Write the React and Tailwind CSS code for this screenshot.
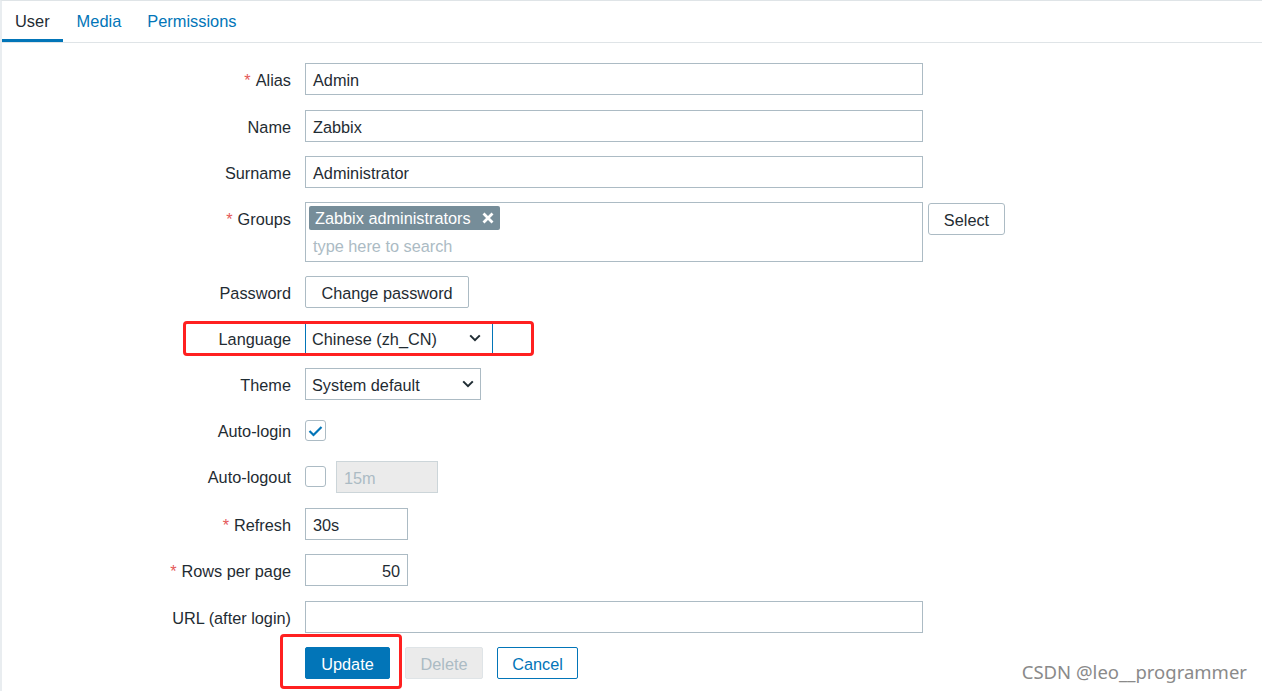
import React from "react";

function Label({ label, req }) {
  return (
    <div className="w-[291px] shrink-0 h-8 pt-[2px] flex items-center justify-end text-[16.3px] text-[#1f2c33] whitespace-nowrap">
      {req && <span className="text-[#e45959] mr-[5px]">*</span>}
      {label}
    </div>
  );
}

function Row({ label, req, children, className = "" }) {
  return (
    <div className={`relative flex items-start ${className}`}>
      <Label label={label} req={req} />
      <div className="ml-[14px] flex items-start">{children}</div>
    </div>
  );
}

function TextBox({ w, children, right }) {
  return (
    <div
      className={`h-8 border border-[#acbbc4] bg-white px-[7px] pt-[2px] flex items-center text-[16.3px] text-[#1f2c33] ${
        right ? "justify-end" : ""
      }`}
      style={{ width: w }}
    >
      {children}
    </div>
  );
}

function Chevron() {
  return (
    <svg width="12" height="8" viewBox="0 0 12 8" fill="none">
      <path d="M1.2 1.4 L6 6.2 L10.8 1.4" stroke="#1f2c33" strokeWidth="2" />
    </svg>
  );
}

function Checkbox({ checked }) {
  return (
    <div className="w-[21px] h-[21px] mt-[6px] border border-[#acbbc4] rounded-[3px] bg-white flex items-center justify-center">
      {checked && (
        <svg width="15" height="12" viewBox="0 0 15 12" fill="none">
          <path d="M1.5 6 L5.5 10 L13.5 2" stroke="#0275b8" strokeWidth="2.2" />
        </svg>
      )}
    </div>
  );
}

export default function App() {
  return (
    <div className="relative w-[1262px] h-[691px] overflow-hidden bg-white font-['Liberation_Sans',Arial,sans-serif] border-t border-l-2 border-t-[#dfe4e7] border-l-[#e9edf0]">
      {/* Tabs */}
      <div className="flex h-[42px] border-b border-[#dfe4e7] text-[16.4px]">
        <div className="px-[13px] flex items-center pt-[3px] border-b-[3px] border-[#0275b8] text-[#1f2c33]">
          User
        </div>
        <div className="px-[13px] flex items-center pt-[3px] border-b-[3px] border-transparent text-[#0275b8] ml-px">
          Media
        </div>
        <div className="px-[13px] flex items-center pt-[3px] border-b-[3px] border-transparent text-[#0275b8]">
          Permissions
        </div>
      </div>

      {/* Form */}
      <div className="flex flex-col gap-[14px] pt-[20px] -ml-[2px]">
        <Row label="Alias" req>
          <TextBox w={618}>Admin</TextBox>
        </Row>
        <Row label="Name" className="mt-px">
          <TextBox w={618}>Zabbix</TextBox>
        </Row>
        <Row label="Surname">
          <TextBox w={618}>Administrator</TextBox>
        </Row>
        <Row label="Groups" req>
          <div className="w-[618px] h-[60px] border border-[#acbbc4] p-[3px] flex flex-col">
            <div className="self-start h-6 bg-[#768d99] rounded-[2px] pl-[6px] pr-[6px] pt-[1px] flex items-center text-white text-[16.3px]">
              Zabbix administrators
              <svg className="ml-[11px] -mt-[1px]" width="12" height="12" viewBox="0 0 12 12" fill="none">
                <path d="M1.5 1.5 L10.5 10.5 M10.5 1.5 L1.5 10.5" stroke="#ffffff" strokeWidth="2.8" />
              </svg>
            </div>
            <div className="pl-[4px] h-[28px] pt-[5px] flex items-center text-[16.3px] text-[#acbbc4]">
              type here to search
            </div>
          </div>
          <div className="ml-[5px] mt-px h-8 w-[77px] border border-[#acbbc4] rounded-[3px] bg-white pt-[2px] flex items-center justify-center text-[16.3px] text-[#1f2c33]">
            Select
          </div>
        </Row>
        <Row label="Password">
          <div className="h-8 w-[164px] border border-[#acbbc4] rounded-[2px] bg-white pt-[2px] flex items-center justify-center text-[16.3px] text-[#1f2c33]">
            Change password
          </div>
        </Row>
        <Row label="Language">
          <div className="h-8 w-[188px] border border-[#0275b8] bg-white pl-[6px] pr-[5px] flex items-center justify-between text-[16.3px] text-[#1f2c33]">
            <span className="pt-[2px]">Chinese (zh_CN)</span>
            <span className="mr-[6px] flex"><Chevron /></span>
          </div>
          <div className="absolute left-[183px] top-[-1px] w-[351px] h-[35px] border-[3px] border-[#ff2020] rounded-[4px] pointer-events-none" />
        </Row>
        <Row label="Theme">
          <div className="h-8 w-[176px] border border-[#acbbc4] bg-white pl-[6px] pr-[6px] flex items-center justify-between text-[16.3px] text-[#1f2c33]">
            <span className="pt-[2px]">System default</span>
            <Chevron />
          </div>
        </Row>
        <Row label="Auto-login">
          <Checkbox checked />
        </Row>
        <Row label="Auto-logout">
          <Checkbox />
          <div className="ml-[10px] mt-px h-8 w-[102px] border border-[#ccd5d9] bg-[#ebebeb] px-[7px] pt-[2px] flex items-center text-[16.3px] text-[#acbbc4]">
            15m
          </div>
        </Row>
        <Row label="Refresh" req className="mt-px">
          <TextBox w={103}>30s</TextBox>
        </Row>
        <Row label="Rows per page" req>
          <TextBox w={103} right>
            50
          </TextBox>
        </Row>
        <Row label="URL (after login)" className="mt-px">
          <TextBox w={618}></TextBox>
        </Row>
        <div className="relative flex items-start">
          <div className="w-[291px] shrink-0" />
          <div className="ml-[14px] flex items-start text-[16.3px]">
            <div className="h-8 w-[85px] bg-[#0275b8] border border-[#0275b8] rounded-[2px] text-white pt-[2px] flex items-center justify-center">
              Update
            </div>
            <div className="ml-[15px] h-8 w-[78px] bg-[#ebebeb] border border-[#dfe4e7] rounded-[2px] text-[#acbbc4] pt-[2px] flex items-center justify-center">
              Delete
            </div>
            <div className="ml-[14px] h-8 w-[81px] bg-white border border-[#0275b8] rounded-[2px] text-[#0275b8] pt-[2px] flex items-center justify-center">
              Cancel
            </div>
          </div>
          <div className="absolute left-[280px] top-[-13px] w-[122px] h-[55px] border-[3px] border-[#ff2020] rounded-[4px] pointer-events-none" />
        </div>
      </div>

      {/* Watermark */}
      <div className="absolute right-[15px] top-[658px] text-[18.5px] leading-[26px] text-[#8a8a8a] font-['Noto_Sans',sans-serif] whitespace-nowrap">
        CSDN @leo__programmer
      </div>
    </div>
  );
}
